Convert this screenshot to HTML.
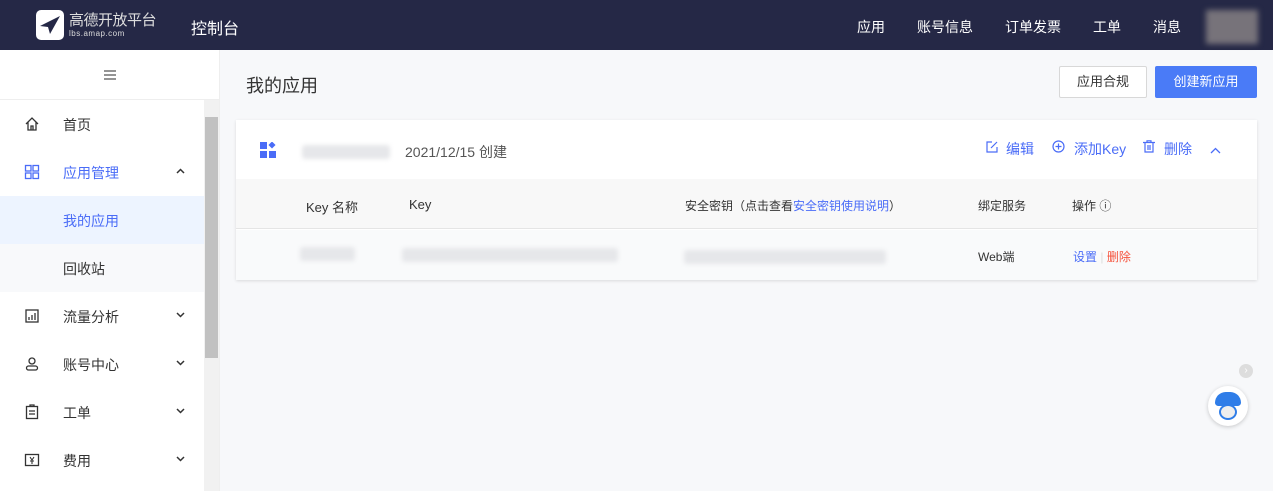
<!DOCTYPE html>
<html><head><meta charset="utf-8"><style>
*{box-sizing:border-box;margin:0;padding:0}
body{width:1273px;height:491px;overflow:hidden;background:#f7f8fa;font-family:"Liberation Sans","Noto Sans CJK SC",sans-serif;font-size:13px;color:#333;position:relative}
.top{position:absolute;left:0;top:0;width:1273px;height:50px;background:#252846;color:#fff}
.top .nav{position:absolute;top:17px;font-size:14px}
.side{position:absolute;left:0;top:50px;width:220px;height:441px;background:#fff;border-right:1px solid #eee}
.item{position:absolute;left:0;width:204px;height:48px;font-size:14px;color:#333}
.item .t{position:absolute;left:63px;top:15px}
.item .ic{position:absolute;left:24px;top:16px;width:16px;height:16px}
.item .ar{position:absolute;left:176px;top:20px}
.abs{position:absolute}
.blur{position:absolute;background:#e6e7ea;border-radius:3px;filter:blur(2px)}
</style></head><body>
<div class="top">
 <div class="abs" style="left:36px;top:10px;width:28px;height:30px;background:#fff;border-radius:5px"></div>
 <svg class="abs" style="left:38px;top:14px" width="24" height="22"><path d="M22 2 L2 12 L10 13 L12 20 Z" fill="#252846"/></svg>
 <div class="abs" style="left:69px;top:9px;font-size:15px;color:#ddd;letter-spacing:-0.5px">高德开放平台</div>
 <div class="abs" style="left:69px;top:29px;font-size:8px;color:#ddd;letter-spacing:0.5px">lbs.amap.com</div>
 <div class="abs" style="left:191px;top:15px;font-size:16px">控制台</div>
 <div class="nav" style="left:857px">应用</div>
 <div class="nav" style="left:917px">账号信息</div>
 <div class="nav" style="left:1005px">订单发票</div>
 <div class="nav" style="left:1093px">工单</div>
 <div class="nav" style="left:1153px">消息</div>
 <div class="abs" style="left:1206px;top:10px;width:52px;height:34px;background:#77737a;filter:blur(3px)"></div>
</div>
<div class="side">
 <svg class="abs" style="left:104px;top:20px" width="12" height="10"><path d="M0 1H12M0 5H12M0 9H12" stroke="#555" stroke-width="1.2"/></svg>
 <div class="abs" style="left:0;top:49px;width:220px;height:1px;background:#eee"></div>
 <div class="abs" style="left:204px;top:50px;width:15px;height:391px;background:#f1f1f1"></div>
 <div class="abs" style="left:205px;top:67px;width:13px;height:241px;background:#c1c1c1"></div>
 <div class="item" style="top:50px"><svg class="ic" viewBox="0 0 16 16"><path d="M2 8 L8 2 L14 8 M4 6 V14 H12 V6 M7 14 V10 H9 V14" fill="none" stroke="#333" stroke-width="1.3"/></svg><span class="t">首页</span></div>
 <div class="item" style="top:98px;color:#4a6cf7"><svg class="ic" viewBox="0 0 16 16"><rect x="1.5" y="1.5" width="5.5" height="5.5" fill="none" stroke="#4a6cf7" stroke-width="1.3"/><rect x="9" y="1.5" width="5.5" height="5.5" fill="none" stroke="#4a6cf7" stroke-width="1.3"/><rect x="1.5" y="9" width="5.5" height="5.5" fill="none" stroke="#4a6cf7" stroke-width="1.3"/><rect x="9" y="9" width="5.5" height="5.5" fill="none" stroke="#4a6cf7" stroke-width="1.3"/></svg><span class="t">应用管理</span><svg class="ar" width="9" height="6"><path d="M1 5L4.5 1.5L8 5" fill="none" stroke="#333" stroke-width="1.5"/></svg></div>
 <div class="item" style="top:146px;background:#edf4ff;color:#4a6cf7"><span class="t">我的应用</span></div>
 <div class="item" style="top:194px;background:#f8f9fb"><span class="t">回收站</span></div>
 <div class="item" style="top:242px"><svg class="ic" viewBox="0 0 16 16"><rect x="2" y="2" width="12" height="12" fill="none" stroke="#333" stroke-width="1.3"/><path d="M5 12V9M8 12V7M11 12V5" stroke="#333" stroke-width="1.3"/></svg><span class="t">流量分析</span><svg class="ar" width="9" height="6"><path d="M1 1L4.5 4.5L8 1" fill="none" stroke="#333" stroke-width="1.5"/></svg></div>
 <div class="item" style="top:290px"><svg class="ic" viewBox="0 0 16 16"><circle cx="8" cy="5" r="3" fill="none" stroke="#333" stroke-width="1.3"/><rect x="2.5" y="10" width="11" height="4" rx="2" fill="none" stroke="#333" stroke-width="1.3"/></svg><span class="t">账号中心</span><svg class="ar" width="9" height="6"><path d="M1 1L4.5 4.5L8 1" fill="none" stroke="#333" stroke-width="1.5"/></svg></div>
 <div class="item" style="top:338px"><svg class="ic" viewBox="0 0 16 16"><rect x="2.5" y="2.5" width="11" height="12" fill="none" stroke="#333" stroke-width="1.3"/><path d="M5 7H11M5 10H11M6 2.5V1H10V2.5" stroke="#333" stroke-width="1.3" fill="none"/></svg><span class="t">工单</span><svg class="ar" width="9" height="6"><path d="M1 1L4.5 4.5L8 1" fill="none" stroke="#333" stroke-width="1.5"/></svg></div>
 <div class="item" style="top:386px"><svg class="ic" viewBox="0 0 16 16"><rect x="1.5" y="2.5" width="13" height="11" fill="none" stroke="#333" stroke-width="1.3"/><path d="M6 5L8 8L10 5M8 8V12M6 9H10" stroke="#333" stroke-width="1.1" fill="none"/></svg><span class="t">费用</span><svg class="ar" width="9" height="6"><path d="M1 1L4.5 4.5L8 1" fill="none" stroke="#333" stroke-width="1.5"/></svg></div>
</div>
<div class="abs" style="left:246px;top:72px;font-size:18px;color:#333">我的应用</div>
<div class="abs" style="left:1059px;top:66px;width:88px;height:32px;border:1px solid #d8d8d8;background:#fff;border-radius:2px;text-align:center;line-height:30px;font-size:13px">应用合规</div>
<div class="abs" style="left:1155px;top:66px;width:102px;height:32px;background:#4a7bf7;color:#fff;border-radius:2px;text-align:center;line-height:32px;font-size:13px">创建新应用</div>
<div class="abs" style="left:236px;top:120px;width:1021px;height:160px;background:#fff;box-shadow:0 1px 3px rgba(0,0,0,.12)">
 <svg class="abs" style="left:24px;top:22px" width="16" height="16"><rect x="0" y="0" width="7" height="7" fill="#4a6cf7"/><rect x="9.5" y="0.5" width="5" height="5" fill="#4a6cf7" transform="rotate(45 12 3)"/><rect x="0" y="9" width="7" height="7" fill="#4a6cf7"/><rect x="9" y="9" width="7" height="7" fill="#4a6cf7"/></svg>
 <div class="blur" style="left:66px;top:25px;width:88px;height:14px"></div>
 <div class="abs" style="left:169px;top:22px;font-size:14px;color:#555">2021/12/15 创建</div>
 <svg class="abs" style="left:750px;top:21px" width="12" height="12"><path d="M6 1H1V11H11V6M5 7L11 1" fill="none" stroke="#4a6cf7" stroke-width="1.2"/></svg>
 <div class="abs" style="left:770px;top:19px;font-size:14px;color:#4a6cf7">编辑</div>
 <svg class="abs" style="left:816px;top:20px" width="13" height="13"><circle cx="6.5" cy="6.5" r="5.5" fill="none" stroke="#4a6cf7" stroke-width="1.2"/><path d="M3.5 6.5H9.5M6.5 3.5V9.5" stroke="#4a6cf7" stroke-width="1.2"/></svg>
 <div class="abs" style="left:838px;top:19px;font-size:14px;color:#4a6cf7">添加Key</div>
 <svg class="abs" style="left:907px;top:20px" width="12" height="13"><path d="M0 2.5H12M4 2.5V0.8H8V2.5M2 2.5V12H10V2.5M5 5V10M7 5V10" fill="none" stroke="#4a6cf7" stroke-width="1.2"/></svg>
 <div class="abs" style="left:928px;top:19px;font-size:14px;color:#4a6cf7">删除</div>
 <svg class="abs" style="left:974px;top:27px" width="11" height="7"><path d="M1 6L5.5 1.5L10 6" fill="none" stroke="#4a6cf7" stroke-width="1.3"/></svg>
 <div class="abs" style="left:0;top:59px;width:1021px;height:50px;background:#f8f8f8;border-bottom:1px solid #e5e5e5"></div>
 <div class="abs" style="left:70px;top:77px">Key 名称</div>
 <div class="abs" style="left:173px;top:77px">Key</div>
 <div class="abs" style="left:449px;top:77px;font-size:12px">安全密钥（点击查看<span style="color:#4a6cf7">安全密钥使用说明</span>）</div>
 <div class="abs" style="left:742px;top:77px;font-size:12px">绑定服务</div>
 <div class="abs" style="left:836px;top:77px;font-size:12px">操作 ⓘ</div>
 <div class="abs" style="left:0;top:110px;width:1021px;height:50px;background:#f9fafb"></div>
 <div class="blur" style="left:64px;top:127px;width:55px;height:14px"></div>
 <div class="blur" style="left:166px;top:128px;width:216px;height:14px"></div>
 <div class="blur" style="left:448px;top:130px;width:202px;height:14px"></div>
 <div class="abs" style="left:742px;top:128px;font-size:12px">Web端</div>
 <div class="abs" style="left:837px;top:128px;font-size:12px;color:#4a6cf7">设置 <span style="color:#ddd">|</span> <span style="color:#f5533d">删除</span></div>
</div>
<div class="abs" style="left:1239px;top:364px;width:14px;height:14px;border-radius:50%;background:#ddd;color:#fff;font-size:10px;text-align:center;line-height:14px">›</div>
<div class="abs" style="left:1208px;top:386px;width:40px;height:40px;border-radius:50%;background:#fff;box-shadow:0 1px 4px rgba(0,0,0,.2)"></div>
<div class="abs" style="left:1215px;top:392px;width:26px;height:14px;border-radius:13px 13px 4px 4px;background:#2f7de8"></div>
<div class="abs" style="left:1219px;top:404px;width:18px;height:16px;border-radius:50%;background:#eee;border:2px solid #2f7de8"></div>
</body></html>
